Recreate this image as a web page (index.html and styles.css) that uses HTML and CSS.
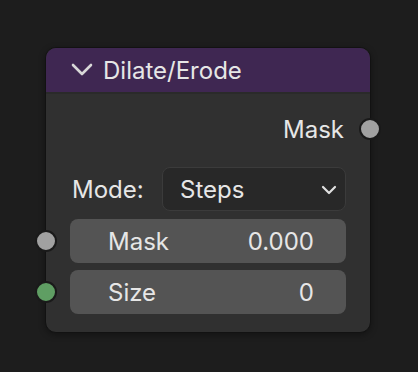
FILE: index.html
```html
<!DOCTYPE html>
<html lang="en">
<head>
    <meta charset="UTF-8">
    <title>Dilate/Erode</title>
    <link rel="stylesheet" href="styles.css">
</head>
<body>

    <div class="node">
        <div class="node-header">
            <svg class="collapse" width="22" height="14" viewBox="0 0 22 14">
                <path d="M2 2 L11 11 L20 2" fill="none" stroke="#d8d8d8" stroke-width="2.6" stroke-linecap="round" stroke-linejoin="round"/>
            </svg>
            <span class="title">Dilate/Erode</span>
        </div>
        <div class="node-body">
            <div class="output-row">
                <span>Mask</span>
                <span class="socket socket-out grey"></span>
            </div>

            <div class="mode-row">
                <span class="mode-label">Mode:</span>
                <div class="dropdown">
                    <span>Steps</span>
                    <svg width="16" height="10" viewBox="0 0 16 10">
                        <path d="M2 2 L8 8 L14 2" fill="none" stroke="#e0e0e0" stroke-width="2.2" stroke-linecap="round" stroke-linejoin="round"/>
                    </svg>
                </div>
            </div>

            <div class="field">
                <span class="socket socket-in grey"></span>
                <span>Mask</span>
                <span>0.000</span>
            </div>
            <div class="field">
                <span class="socket socket-in green"></span>
                <span>Size</span>
                <span>0</span>
            </div>
        </div>
    </div>

</body>
</html>
```

FILE: styles.css
```css
* {
    margin: 0;
    padding: 0;
    box-sizing: border-box;
}
body {
    width: 418px;
    height: 372px;
    background-color: #1d1d1d;
    font-family: Inter, "Noto Sans", sans-serif;
    color: #e6e6e6;
    font-size: 24px;
    overflow: hidden;
}
.node {
    margin: 47px 0 0 45px;
    width: 326px;
    height: 286px;
    background-color: #303030;
    border: 1px solid #121212;
    border-radius: 11px;
    box-shadow: 0 2px 6px rgba(0, 0, 0, 0.35);
    display: flex;
    flex-direction: column;
}
.node-header {
    flex-shrink: 0;
    height: 46px;
    background-color: #3f2752;
    border-radius: 10px 10px 0 0;
    border-bottom: 2px solid #2a2a2a;
    display: flex;
    align-items: center;
    padding-left: 25px;
    gap: 10px;
}
.title {
    line-height: 1;
    margin-top: 1px;
}
.node-body {
    flex: 1;
    padding: 19px 24px 0 24px;
    display: flex;
    flex-direction: column;
}
.output-row {
    position: relative;
    flex-shrink: 0;
    height: 32px;
    display: flex;
    align-items: center;
    justify-content: flex-end;
    padding-right: 2px;
}
.mode-row {
    flex-shrink: 0;
    margin-top: 22px;
    height: 44px;
    display: flex;
    align-items: center;
}
.mode-label {
    width: 92px;
    padding-left: 2px;
}
.dropdown {
    flex: 1;
    height: 44px;
    background-color: #282828;
    border: 1px solid #3b3b3b;
    border-radius: 8px;
    display: flex;
    align-items: center;
    justify-content: space-between;
    padding: 0 8px 0 17px;
}
.dropdown svg {
    margin-top: 2px;
}
.field {
    position: relative;
    flex-shrink: 0;
    margin-top: 8px;
    height: 44px;
    background-color: #545454;
    border-radius: 8px;
    display: flex;
    align-items: center;
    justify-content: space-between;
    padding: 0 32px 0 38px;
}
.field + .field {
    margin-top: 7px;
}
.socket {
    position: absolute;
    width: 22px;
    height: 22px;
    border-radius: 50%;
    border: 2px solid #1a1a1a;
    top: 50%;
    margin-top: -11px;
}
.socket-out {
    right: -35px;
}
.socket-in {
    left: -35px;
}
.grey {
    background-color: #a1a1a1;
}
.green {
    background-color: #5f9e63;
}
```
